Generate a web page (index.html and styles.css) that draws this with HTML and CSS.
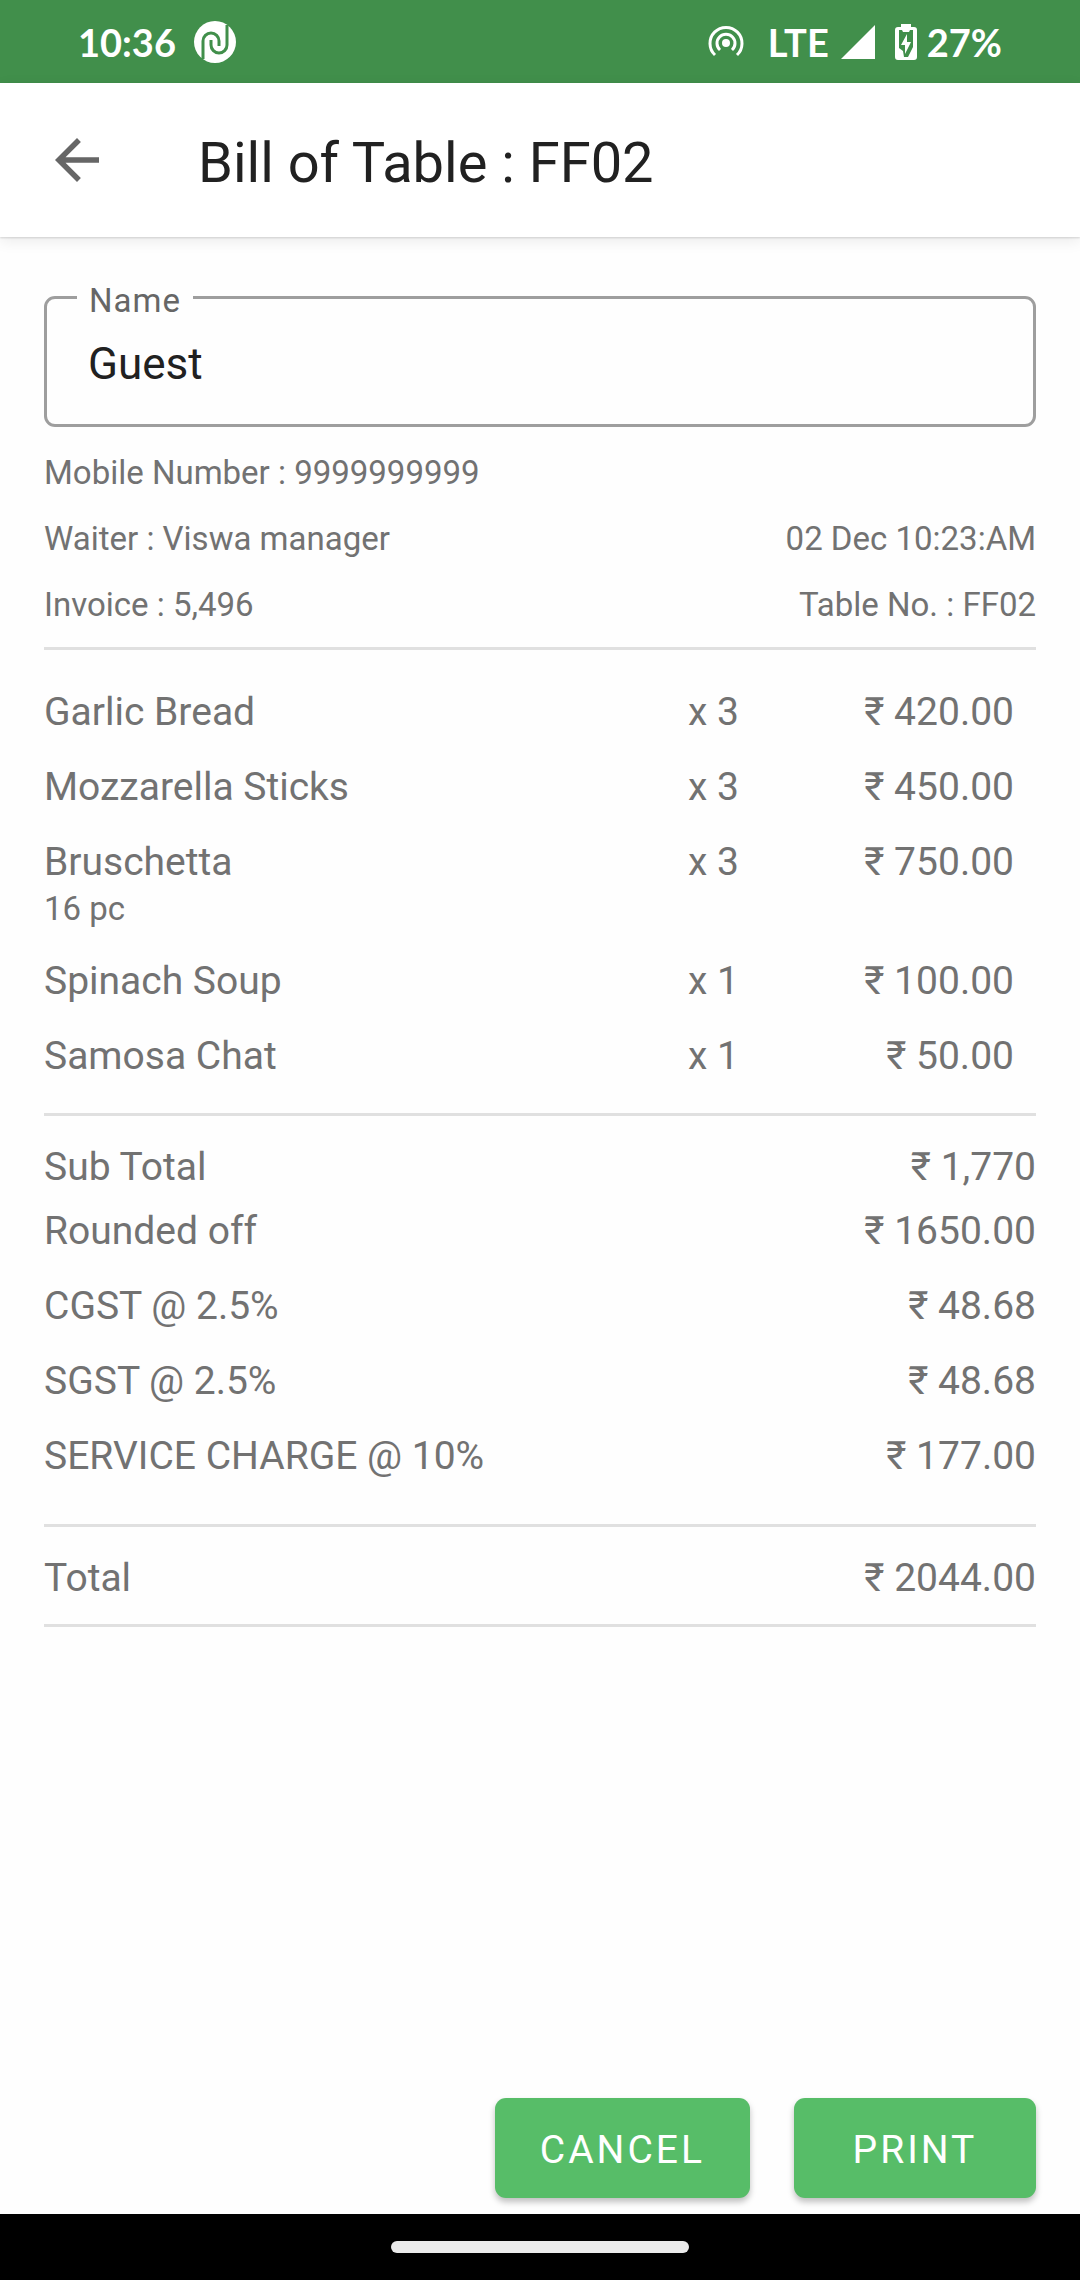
FILE: index.html
```
<!DOCTYPE html>
<html lang="en">
<head>
    <meta charset="UTF-8">
    <meta name="viewport" content="width=device-width, initial-scale=1.0">
    <title>Bill of Table : FF02</title>
    <link rel="stylesheet" href="styles.css">
</head>
<body>

    <!-- Status Bar -->
    <div class="status-bar">
        <div class="status-group">
            <span class="clock">10:36</span>
            <svg class="app-icon" viewBox="0 0 42 42">
                <circle cx="21" cy="21" r="21" fill="#fff"/>
                <path d="M9 38V20a8 8 0 0 1 16 0v5M17 19v5a8 8 0 0 0 16 0V4" fill="none" stroke="#418f4b" stroke-width="3"/>
            </svg>
        </div>
        <div class="status-group">
            <svg class="hotspot-icon" viewBox="0 0 36 36" fill="none" stroke="#fff" stroke-width="3">
                <circle cx="18" cy="19" r="4" fill="#fff" stroke="none"/>
                <path d="M12 26a9 9 0 1 1 12 0"/>
                <path d="M7 31a16 16 0 1 1 22 0"/>
            </svg>
            <span class="network">LTE</span>
            <svg class="signal-icon" viewBox="0 0 34 34"><path d="M34 0v34H0z" fill="#fff"/></svg>
            <svg class="battery-icon" viewBox="0 0 22 36">
                <path d="M6 0h10v3h3a3 3 0 0 1 3 3v27a3 3 0 0 1-3 3H3a3 3 0 0 1-3-3V6a3 3 0 0 1 3-3h3z" fill="#fff"/>
                <path d="M4 6h3l1 2h6l1-2h3v17l-5 10H9L8 27l-4-3z" fill="#418f4b"/>
                <path d="M12 10L6 21h4v9l6-12h-4z" fill="#fff"/>
            </svg>
            <span>27%</span>
        </div>
    </div>

    <!-- App Bar -->
    <header class="app-bar">
        <button type="button" class="back-btn" aria-label="Back">
            <svg viewBox="0 0 24 24"><path d="M20 11H7.83l5.59-5.59L12 4l-8 8 8 8 1.41-1.41L7.83 13H20v-2z" fill="#666"/></svg>
        </button>
        <h1>Bill of Table : FF02</h1>
    </header>

    <main class="bill">
        <!-- Customer Name -->
        <div class="field">
            <label for="name">Name</label>
            <input type="text" id="name" value="Guest">
        </div>

        <!-- Bill Info -->
        <div class="info">
            <div class="info-row"><span>Mobile Number : 9999999999</span></div>
            <div class="info-row"><span>Waiter : Viswa manager</span><span>02 Dec 10:23:AM</span></div>
            <div class="info-row"><span>Invoice : 5,496</span><span>Table No. : FF02</span></div>
        </div>

        <!-- Ordered Items -->
        <table class="items">
            <tr><td>Garlic Bread</td><td class="qty">x 3</td><td class="price">₹ 420.00</td></tr>
            <tr><td>Mozzarella Sticks</td><td class="qty">x 3</td><td class="price">₹ 450.00</td></tr>
            <tr><td>Bruschetta<small>16 pc</small></td><td class="qty">x 3</td><td class="price">₹ 750.00</td></tr>
            <tr><td>Spinach Soup</td><td class="qty">x 1</td><td class="price">₹ 100.00</td></tr>
            <tr><td>Samosa Chat</td><td class="qty">x 1</td><td class="price">₹ 50.00</td></tr>
        </table>

        <!-- Charges -->
        <table class="charges">
            <tr class="subtotal"><td>Sub Total</td><td class="amount">₹ 1,770</td></tr>
            <tr><td>Rounded off</td><td class="amount">₹ 1650.00</td></tr>
            <tr><td>CGST @ 2.5%</td><td class="amount">₹ 48.68</td></tr>
            <tr><td>SGST @ 2.5%</td><td class="amount">₹ 48.68</td></tr>
            <tr><td>SERVICE CHARGE @ 10%</td><td class="amount">₹ 177.00</td></tr>
        </table>

        <div class="total"><span>Total</span><span>₹ 2044.00</span></div>
    </main>

    <!-- Actions -->
    <div class="actions">
        <button type="button" class="btn">CANCEL</button>
        <button type="button" class="btn">PRINT</button>
    </div>

    <!-- Gesture Bar -->
    <div class="nav-bar"><div class="nav-handle"></div></div>

</body>
</html>
```
FILE: styles.css
```
* {
    box-sizing: border-box;
}
body {
    margin: 0;
    min-height: 100vh;
    display: flex;
    flex-direction: column;
    background: #fefefe;
    color: #727272;
    font-family: Roboto, sans-serif;
    font-size: 39px;
    line-height: 46px;
}

/* Status bar */
.status-bar {
    height: 83px;
    padding: 0 78px;
    display: flex;
    justify-content: space-between;
    align-items: center;
    background: #418f4b;
    color: #fff;
    font-family: Lato, sans-serif;
    font-size: 38px;
    font-weight: 700;
}
.status-group {
    display: flex;
    align-items: center;
}
.app-icon {
    width: 42px;
    height: 42px;
    margin-left: 18px;
}
.hotspot-icon {
    width: 36px;
    height: 36px;
}
.network {
    margin: 0 12px 0 24px;
}
.signal-icon {
    width: 34px;
    height: 34px;
}
.battery-icon {
    width: 22px;
    height: 36px;
    margin: 0 10px 0 20px;
}

/* App bar */
.app-bar {
    height: 154px;
    padding: 0 44px;
    display: flex;
    align-items: center;
    background: #fff;
    box-shadow: 0 1px 2px rgba(0, 0, 0, 0.15), 0 4px 14px rgba(0, 0, 0, 0.08);
}
.back-btn {
    width: 66px;
    height: 66px;
    padding: 0;
    border: none;
    background: none;
}
.back-btn svg {
    display: block;
}
.app-bar h1 {
    margin: 6px 0 0 88px;
    font-size: 56px;
    line-height: 64px;
    font-weight: 400;
    color: #212121;
}

.bill {
    flex: 1;
    padding: 59px 44px 0;
}

/* Outlined text field */
.field {
    position: relative;
}
.field label {
    position: absolute;
    top: -15px;
    left: 33px;
    padding: 0 12px;
    background: #fefefe;
    font-size: 33px;
    line-height: 40px;
    letter-spacing: 1px;
    color: #666;
}
.field input {
    display: block;
    width: 100%;
    height: 131px;
    padding: 4px 41px 0;
    border: 3px solid #9e9e9e;
    border-radius: 11px;
    background: none;
    color: #212121;
    font-family: inherit;
    font-size: 44px;
}

/* Waiter, invoice and table */
.info {
    padding: 13px 0 9px;
    border-bottom: 3px solid #e0e0e0;
    font-size: 33px;
}
.info-row {
    display: flex;
    justify-content: space-between;
    padding: 13px 0;
    line-height: 40px;
}

table {
    width: 100%;
    border-collapse: collapse;
}
td {
    padding: 0;
    vertical-align: top;
}
.price,
.amount {
    text-align: right;
}

/* Items */
.items {
    border-bottom: 3px solid #e0e0e0;
}
.items td {
    padding: 0 0 29px;
}
.items tr:first-child td {
    padding-top: 39px;
}
.items tr:last-child td {
    padding-bottom: 34px;
}
.items small {
    display: block;
    margin-top: 4px;
    font-size: 33px;
    line-height: 40px;
}
.items .qty {
    width: 91px;
}
.items .price {
    width: 257px;
    padding-right: 22px;
}

/* Charges */
.charges {
    border-bottom: 3px solid #e0e0e0;
}
.charges td {
    padding-bottom: 29px;
}
.charges .subtotal td {
    padding: 28px 0 18px;
}
.charges tr:last-child td {
    padding-bottom: 45px;
}

.total {
    display: flex;
    justify-content: space-between;
    padding: 28px 0 23px;
    border-bottom: 3px solid #e0e0e0;
}

/* Buttons */
.actions {
    display: flex;
    justify-content: flex-end;
    gap: 44px;
    padding: 0 44px 16px;
}
.btn {
    height: 100px;
    min-width: 242px;
    padding: 3px 45px 0;
    border: none;
    border-radius: 11px;
    background: #57bd68;
    box-shadow: 0 4px 6px rgba(0, 0, 0, 0.25);
    color: #fff;
    font-family: inherit;
    font-size: 39px;
    letter-spacing: 3px;
}

.nav-bar {
    height: 66px;
    display: flex;
    justify-content: center;
    align-items: center;
    background: #000;
}
.nav-handle {
    width: 298px;
    height: 12px;
    border-radius: 6px;
    background: #ebebeb;
}
```
